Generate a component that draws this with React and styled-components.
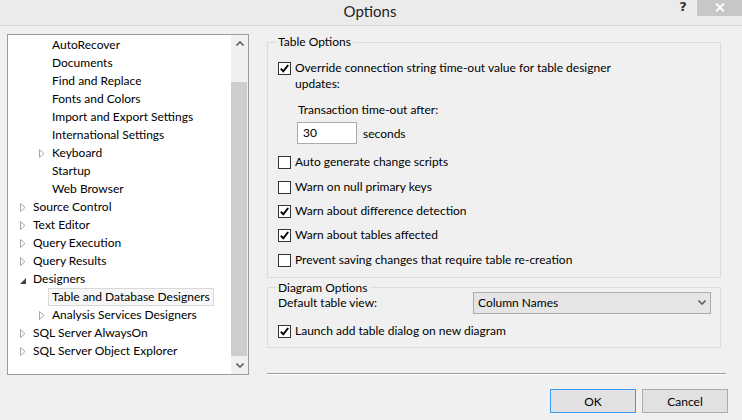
import React from "react";
import styled, { createGlobalStyle } from "styled-components";

const GlobalStyle = createGlobalStyle`
  html, body {
    margin: 0;
    background: #f0f0f0;
  }
  * {
    box-sizing: border-box;
  }
`;

const StyledWindow = styled.div`
  width: 742px;
  height: 420px;
  display: flex;
  flex-direction: column;
  background: #f0f0f0;
  font-family: "Lato", "Segoe UI", sans-serif;
  font-size: 12px;
  color: #000;
  overflow: hidden;
`;

const StyledTitleBar = styled.div`
  height: 26px;
  flex-shrink: 0;
  display: flex;
  align-items: flex-start;
  background: #ebebeb;
  border-bottom: 1px solid #dadada;
`;

const StyledTitle = styled.div`
  flex: 1;
  padding-left: 65px;
  text-align: center;
  font-size: 15px;
  line-height: 22px;
  color: #1e1e1e;
`;

const StyledHelp = styled.div`
  width: 16px;
  font-family: "DejaVu Sans", sans-serif;
  font-size: 13px;
  font-weight: 700;
  line-height: 14px;
  color: #333;
  text-align: center;
`;

const StyledClose = styled.div`
  width: 45px;
  height: 16px;
  margin-left: 6px;
  display: flex;
  align-items: center;
  justify-content: center;
  padding-bottom: 2px;
  background: #c7c7c7;
`;

const StyledBody = styled.div`
  flex: 1;
  display: flex;
  padding-left: 7px;
`;

const StyledTree = styled.div`
  width: 242px;
  height: 341px;
  margin-top: 8px;
  display: flex;
  background: #fff;
  border: 1px solid #9b9b9b;
`;

const StyledTreeList = styled.div`
  flex: 1;
  padding-top: 1px;
  overflow: hidden;
`;

const StyledTreeRow = styled.div`
  height: 18px;
  display: flex;
  align-items: center;
  padding-left: ${(p) => 12 + p.depth * 19}px;
`;

const StyledExpander = styled.div`
  width: 7px;
  height: 18px;
  margin-right: 6px;
  display: flex;
  align-items: center;
`;

const StyledTreeLabel = styled.div`
  line-height: 16px;
  padding: 0 3px;
  margin-left: -4px;
  border: 1px solid ${(p) => (p.selected ? "#d9d9d9" : "transparent")};
  background: ${(p) => (p.selected ? "#f7f7f7" : "transparent")};
  white-space: nowrap;
`;

const StyledScrollbar = styled.div`
  width: 17px;
  display: flex;
  flex-direction: column;
  background: #f0f0f0;
`;

const StyledScrollArrow = styled.div`
  height: 17px;
  display: flex;
  align-items: center;
  justify-content: center;
`;

const StyledTrack = styled.div`
  flex: 1;
  display: flex;
  flex-direction: column;
  padding: 30px 1px 1px 0;
`;

const StyledThumb = styled.div`
  flex: 1;
  background: #cdcdcd;
`;

const StyledPanel = styled.div`
  flex: 1;
  display: flex;
  flex-direction: column;
  margin-left: 18px;
  padding-top: 8px;
  padding-right: 13px;
`;

const StyledGroup = styled.fieldset`
  margin: ${(p) => p.gap || 0}px 8px 0 0;
  padding: 0 8px ${(p) => p.bottom}px 10px;
  border: 1px solid #dcdcdc;
  min-width: 0;
`;

const StyledLegend = styled.legend`
  margin-left: -2px;
  padding: 0 2px;
  line-height: 16px;
`;

const StyledCheckRow = styled.label`
  display: flex;
  align-items: flex-start;
  line-height: 16px;
  margin-top: ${(p) => p.top}px;
  max-width: ${(p) => p.wrap || 1000}px;
`;

const StyledBox = styled.span`
  width: 13px;
  height: 13px;
  margin-top: 2px;
  margin-right: 4px;
  flex-shrink: 0;
  display: flex;
  align-items: center;
  justify-content: center;
  background: #fff;
  border: 1px solid #333;
`;

const StyledIndent = styled.div`
  padding-left: 19px;
`;

const StyledFieldLabel = styled.div`
  line-height: 16px;
  margin-top: ${(p) => p.top}px;
  padding-left: ${(p) => p.inset || 0}px;
`;

const StyledInputRow = styled.div`
  display: flex;
  align-items: center;
  margin-top: 4px;
`;

const StyledInput = styled.div`
  width: 60px;
  height: 22px;
  padding-left: 5px;
  line-height: 20px;
  background: #fff;
  border: 1px solid #ababab;
`;

const StyledUnit = styled.span`
  margin-left: 6px;
`;

const StyledSelectRow = styled.div`
  display: flex;
  align-items: center;
  justify-content: space-between;
  margin-top: -4px;
`;

const StyledSelect = styled.div`
  width: 238px;
  height: 22px;
  margin-right: 1px;
  display: flex;
  align-items: center;
  justify-content: space-between;
  padding: 0 4px;
  background: #e5e5e5;
  border: 1px solid #acacac;
`;

const StyledSpacer = styled.div`
  flex: 1;
`;

const StyledSeparator = styled.div`
  height: 1px;
  margin-right: 3px;
  background: #a0a0a0;
  box-shadow: 0 1px 0 #fff;
`;

const StyledButtons = styled.div`
  display: flex;
  justify-content: flex-end;
  gap: 6px;
  margin-top: 15px;
  margin-bottom: 7px;
  margin-right: 1px;
`;

const StyledButton = styled.button`
  width: 86px;
  height: 24px;
  padding: 0;
  font-family: inherit;
  font-size: 12px;
  color: #000;
  background: #e1e1e1;
  border: 1px solid ${(p) => (p.primary ? "#3c9af2" : "#adadad")};
`;

const RightArrow = () => (
  <svg width="6" height="9" viewBox="0 0 6 9">
    <path d="M0.5 0.5 L5 4.5 L0.5 8.5 Z" fill="none" stroke="#a6a6a6" />
  </svg>
);

const OpenArrow = () => (
  <svg width="6" height="6" viewBox="0 0 6 6" style={{ marginTop: 4 }}>
    <path d="M6 0 L6 6 L0 6 Z" fill="#404040" />
  </svg>
);

const Check = () => (
  <svg width="9" height="9" viewBox="0 0 9 9">
    <path
      d="M0.8 4.6 L3.3 7.3 L8.2 1"
      fill="none"
      stroke="#000"
      strokeWidth="1.9"
    />
  </svg>
);

const Chevron = ({ up }) => (
  <svg width="8" height="5" viewBox="0 0 8 5">
    <path
      d={up ? "M0.5 4.5 L4 1 L7.5 4.5" : "M0.5 0.5 L4 4 L7.5 0.5"}
      fill="none"
      stroke="#606060"
      strokeWidth="1.6"
    />
  </svg>
);

const treeItems = [
  { label: "AutoRecover", depth: 1 },
  { label: "Documents", depth: 1 },
  { label: "Find and Replace", depth: 1 },
  { label: "Fonts and Colors", depth: 1 },
  { label: "Import and Export Settings", depth: 1 },
  { label: "International Settings", depth: 1 },
  { label: "Keyboard", depth: 1, arrow: "closed" },
  { label: "Startup", depth: 1 },
  { label: "Web Browser", depth: 1 },
  { label: "Source Control", depth: 0, arrow: "closed" },
  { label: "Text Editor", depth: 0, arrow: "closed" },
  { label: "Query Execution", depth: 0, arrow: "closed" },
  { label: "Query Results", depth: 0, arrow: "closed" },
  { label: "Designers", depth: 0, arrow: "open" },
  { label: "Table and Database Designers", depth: 1, selected: true },
  { label: "Analysis Services Designers", depth: 1, arrow: "closed" },
  { label: "SQL Server AlwaysOn", depth: 0, arrow: "closed" },
  { label: "SQL Server Object Explorer", depth: 0, arrow: "closed" },
];

const tableChecks = [
  { label: "Auto generate change scripts", checked: false, top: 10 },
  { label: "Warn on null primary keys", checked: false, top: 8.5 },
  { label: "Warn about difference detection", checked: true, top: 8 },
  { label: "Warn about tables affected", checked: true, top: 8.5 },
  { label: "Prevent saving changes that require table re-creation", checked: false, top: 8.5 },
];

const CheckRow = ({ checked, children, top, wrap }) => (
  <StyledCheckRow top={top} wrap={wrap}>
    <StyledBox>{checked && <Check />}</StyledBox>
    <span>{children}</span>
  </StyledCheckRow>
);

const OptionsDialog = () => (
  <StyledWindow>
    <StyledTitleBar>
      <StyledTitle>Options</StyledTitle>
      <StyledHelp>?</StyledHelp>
      <StyledClose>
        <svg width="10" height="9" viewBox="0 0 10 9">
          <path d="M1 0.5 L9 8.5 M9 0.5 L1 8.5" stroke="#fff" strokeWidth="1.8" />
        </svg>
      </StyledClose>
    </StyledTitleBar>
    <StyledBody>
      <StyledTree>
        <StyledTreeList>
          {treeItems.map((item) => (
            <StyledTreeRow key={item.label} depth={item.depth}>
              <StyledExpander>
                {item.arrow === "closed" && <RightArrow />}
                {item.arrow === "open" && <OpenArrow />}
              </StyledExpander>
              <StyledTreeLabel selected={item.selected}>{item.label}</StyledTreeLabel>
            </StyledTreeRow>
          ))}
        </StyledTreeList>
        <StyledScrollbar>
          <StyledScrollArrow>
            <Chevron up />
          </StyledScrollArrow>
          <StyledTrack>
            <StyledThumb />
          </StyledTrack>
          <StyledScrollArrow>
            <Chevron />
          </StyledScrollArrow>
        </StyledScrollbar>
      </StyledTree>
      <StyledPanel>
        <StyledGroup bottom={9}>
          <StyledLegend>Table Options</StyledLegend>
          <CheckRow checked top={10} wrap={340}>
            Override connection string time-out value for table designer updates:
          </CheckRow>
          <StyledIndent>
            <StyledFieldLabel top={10} inset={1}>
              Transaction time-out after:
            </StyledFieldLabel>
            <StyledInputRow>
              <StyledInput>30</StyledInput>
              <StyledUnit>seconds</StyledUnit>
            </StyledInputRow>
          </StyledIndent>
          {tableChecks.map((c) => (
            <CheckRow key={c.label} checked={c.checked} top={c.top}>
              {c.label}
            </CheckRow>
          ))}
        </StyledGroup>
        <StyledGroup gap={2} bottom={8}>
          <StyledLegend>Diagram Options</StyledLegend>
          <StyledSelectRow>
            <span>Default table view:</span>
            <StyledSelect>
              <span>Column Names</span>
              <Chevron />
            </StyledSelect>
          </StyledSelectRow>
          <CheckRow checked top={9}>
            Launch add table dialog on new diagram
          </CheckRow>
        </StyledGroup>
        <StyledSpacer />
        <StyledSeparator />
        <StyledButtons>
          <StyledButton primary>OK</StyledButton>
          <StyledButton>Cancel</StyledButton>
        </StyledButtons>
      </StyledPanel>
    </StyledBody>
  </StyledWindow>
);

export default function App() {
  return (
    <>
      <GlobalStyle />
      <OptionsDialog />
    </>
  );
}
